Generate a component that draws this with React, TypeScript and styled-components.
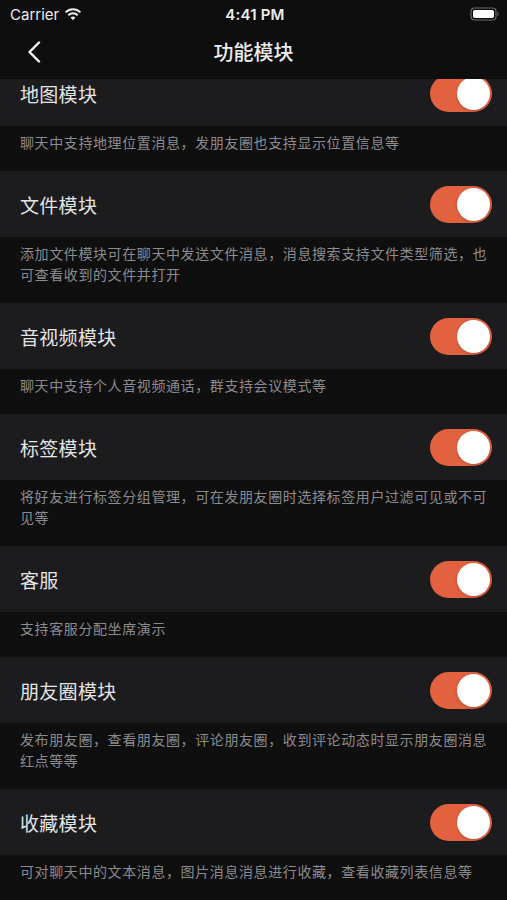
import React, { useState } from 'react'
import styled, { createGlobalStyle } from 'styled-components'

const GlobalStyle = createGlobalStyle`
  html, body {
    margin: 0;
    padding: 0;
    background: #0f0f10;
  }
  body {
    font-family: 'Noto Sans CJK SC', 'Noto Sans', sans-serif;
  }
`

const Page = styled.div`
  width: 507px;
  height: 900px;
  overflow: hidden;
  background: #0f0f10;
  display: flex;
  flex-direction: column;
`

const Header = styled.div`
  background: #0e0e0f;
  flex-shrink: 0;
  position: relative;
  z-index: 2;
`

const StatusBar = styled.div`
  height: 28px;
  display: grid;
  grid-template-columns: 1fr auto 1fr;
  align-items: center;
  padding: 0 7px 0 10px;
  color: #ececec;
  font-family: 'Inter', 'Liberation Sans', sans-serif;
  font-size: 15px;
  font-weight: 400;

  .left {
    display: flex;
    align-items: center;
    gap: 5px;
  }
  .time {
    font-weight: 600;
    letter-spacing: 0.2px;
  }
  .right {
    display: flex;
    justify-content: flex-end;
  }
`

const NavBar = styled.div`
  height: 51px;
  display: flex;
  align-items: center;
  justify-content: center;
  position: relative;

  .title {
    color: #ececec;
    font-size: 20px;
    font-weight: 500;
    margin-top: -4px;
  }
`

const BackButton = styled.button`
  position: absolute;
  left: 20px;
  top: 9px;
  width: 28px;
  height: 30px;
  border: 0;
  background: none;
  padding: 0;
  display: flex;
  align-items: center;
  justify-content: center;
`

const List = styled.div`
  margin-top: -19px;
  display: flex;
  flex-direction: column;
`

const Row = styled.div`
  height: 66px;
  background: #1c1c1e;
  display: flex;
  align-items: center;
  justify-content: space-between;
  padding: 0 15px 0 20px;
  flex-shrink: 0;
`

const RowTitle = styled.div`
  color: #e4e4e4;
  font-size: 19px;
  letter-spacing: 0.3px;
`

const Desc = styled.div`
  background: #0f0f10;
  color: #8b8b8f;
  font-size: 14px;
  line-height: 21px;
  padding: 6px 14px 18px 20px;
  flex-shrink: 0;
  letter-spacing: 0.6px;
`

const Switch = styled.button<{ $on: boolean }>`
  width: 62px;
  height: 37px;
  border-radius: 19px;
  border: 0;
  padding: 2px;
  background: ${p => (p.$on ? '#e2613f' : '#39393d')};
  display: flex;
  justify-content: ${p => (p.$on ? 'flex-end' : 'flex-start')};
  align-items: center;
  cursor: pointer;

  span {
    width: 33px;
    height: 33px;
    border-radius: 50%;
    background: #fff;
    box-shadow: 0 1px 3px rgba(0, 0, 0, 0.2);
  }
`

const modules = [
  { title: '地图模块', desc: '聊天中支持地理位置消息，发朋友圈也支持显示位置信息等' },
  {
    title: '文件模块',
    desc: '添加文件模块可在聊天中发送文件消息，消息搜索支持文件类型筛选，也可查看收到的文件并打开',
  },
  { title: '音视频模块', desc: '聊天中支持个人音视频通话，群支持会议模式等' },
  { title: '标签模块', desc: '将好友进行标签分组管理，可在发朋友圈时选择标签用户过滤可见或不可见等' },
  { title: '客服', desc: '支持客服分配坐席演示' },
  { title: '朋友圈模块', desc: '发布朋友圈，查看朋友圈，评论朋友圈，收到评论动态时显示朋友圈消息红点等等' },
  { title: '收藏模块', desc: '可对聊天中的文本消息，图片消息消息进行收藏，查看收藏列表信息等' },
]

const Wifi = () => (
  <svg width="18" height="14" viewBox="0 0 18 14">
    <path d="M9 13.2 L6.6 10.6 A3.4 3.4 0 0 1 11.4 10.6 Z" fill="#ececec" />
    <path d="M4.3 8.3 A6.6 6.6 0 0 1 13.7 8.3" stroke="#ececec" strokeWidth="2" fill="none" />
    <path d="M1.6 5.4 A10.4 10.4 0 0 1 16.4 5.4" stroke="#ececec" strokeWidth="2" fill="none" />
  </svg>
)

const Battery = () => (
  <svg width="30" height="14" viewBox="0 0 30 14">
    <rect x="1" y="1" width="25" height="12" rx="3.5" fill="none" stroke="#6a6a6a" strokeWidth="1.2" />
    <rect x="3" y="3" width="21" height="8" rx="1.8" fill="#fff" />
    <path d="M27.5 4.8 C29 5.2 29 8.8 27.5 9.2 Z" fill="#6a6a6a" />
  </svg>
)

export default function App() {
  const [state, setState] = useState<boolean[]>(modules.map(() => true))
  const toggle = (i: number) => setState(s => s.map((v, j) => (j === i ? !v : v)))

  return (
    <Page>
      <GlobalStyle />
      <Header>
        <StatusBar>
          <div className="left">
            Carrier <Wifi />
          </div>
          <div className="time">4:41 PM</div>
          <div className="right">
            <Battery />
          </div>
        </StatusBar>
        <NavBar>
          <BackButton aria-label="back">
            <svg width="14" height="22" viewBox="0 0 14 22">
              <path d="M12 1.5 L2.5 11 L12 20.5" stroke="#f2f2f2" strokeWidth="2.4" fill="none" strokeLinecap="round" strokeLinejoin="round" />
            </svg>
          </BackButton>
          <div className="title">功能模块</div>
        </NavBar>
      </Header>
      <List>
        {modules.map((m, i) => (
          <React.Fragment key={m.title}>
            <Row>
              <RowTitle>{m.title}</RowTitle>
              <Switch $on={state[i]} onClick={() => toggle(i)}>
                <span />
              </Switch>
            </Row>
            <Desc>{m.desc}</Desc>
          </React.Fragment>
        ))}
      </List>
    </Page>
  )
}
